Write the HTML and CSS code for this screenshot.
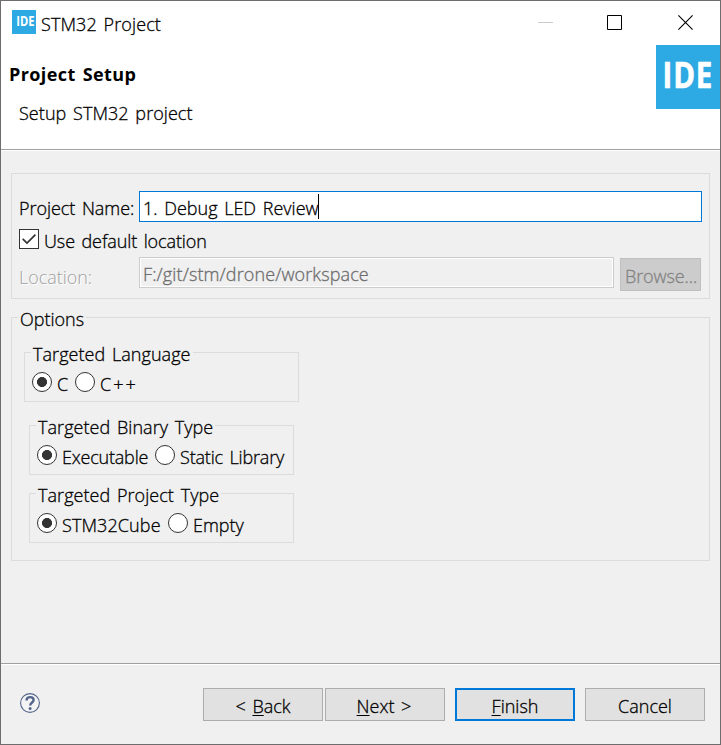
FILE: index.html
```html
<!DOCTYPE html>
<html lang="en">
<head>
<meta charset="utf-8">
<title>STM32 Project</title>
<link rel="stylesheet" href="styles.css">
</head>
<body>
<div class="window">
  <header class="titlebar">
    <span class="app-icon"><span class="ide-small">IDE</span></span>
    <span class="app-title">STM32 Project</span>
    <div class="controls">
      <svg width="16" height="16" viewBox="0 0 16 16"><path d="M0 7.5H15" stroke="#ccc"/></svg>
      <svg width="16" height="16" viewBox="0 0 16 16"><path d="M.5 .5H14.5V14.5H.5Z" fill="none" stroke="#000"/></svg>
      <svg width="16" height="16" viewBox="0 0 16 16"><path d="M.4 .4L14.6 14.6M14.6 .4L.4 14.6" fill="none" stroke="#000" stroke-width="1.1"/></svg>
    </div>
  </header>
  <section class="banner">
    <div class="banner-text">
      <h1>Project Setup</h1>
      <p>Setup STM32 project</p>
    </div>
    <div class="logo"><span class="ide-large">IDE</span></div>
  </section>
  <main class="content">
    <section class="group project">
      <div class="row name-row">
        <label class="field-label">Project Name:</label>
        <div class="input active">1. Debug LED Review<span class="caret"></span></div>
      </div>
      <div class="row check-row">
        <span class="checkbox"><svg width="18" height="18" viewBox="0 0 18 18"><path d="M2.7 8.8L7 13.1L15.4 4.7" fill="none" stroke="#333" stroke-width="1.7"/></svg></span>
        <label class="check-label">Use default location</label>
      </div>
      <div class="row loc-row">
        <label class="field-label disabled">Location:</label>
        <div class="input readonly">F:/git/stm/drone/workspace</div>
        <div class="browse">Browse...</div>
      </div>
    </section>
    <section class="group options">
      <span class="legend">Options</span>
      <div class="group choice language">
        <span class="legend">Targeted Language</span>
        <span class="radio on"></span><span class="radio-label c">C</span>
        <span class="radio"></span><span class="radio-label cpp">C++</span>
      </div>
      <div class="group choice binary">
        <span class="legend">Targeted Binary Type</span>
        <span class="radio on"></span><span class="radio-label exe">Executable</span>
        <span class="radio"></span><span class="radio-label lib">Static Library</span>
      </div>
      <div class="group choice type">
        <span class="legend">Targeted Project Type</span>
        <span class="radio on"></span><span class="radio-label cube">STM32Cube</span>
        <span class="radio"></span><span class="radio-label">Empty</span>
      </div>
    </section>
  </main>
  <footer class="footer">
    <svg class="help" width="22" height="22" viewBox="0 0 22 22"><circle cx="11" cy="11" r="9.4" fill="#f4f4f5" stroke="#53658a" stroke-width="1.1"/><path d="M7.5 8.6C7.5 6.2 9 5.1 11.1 5.1C13.2 5.1 14.6 6.3 14.6 8C14.6 10.5 11.2 10.5 11.2 13.6" fill="none" stroke="#53658a" stroke-width="2.4"/><circle cx="11.1" cy="16.4" r="1.5" fill="#53658a"/></svg>
    <div class="button">&lt; <u>B</u>ack</div>
    <div class="button next"><u>N</u>ext &gt;</div>
    <div class="button primary"><u>F</u>inish</div>
    <div class="button">Cancel</div>
  </footer>
</div>
</body>
</html>
```
FILE: styles.css
```css
* { box-sizing: border-box; }
body {
  margin: 0;
  font: 300 18px/24px "Open Sans", "Noto Sans", sans-serif;
  word-spacing: 2px;
  color: #000;
  -webkit-text-stroke: 0.3px currentColor;
}
.window {
  display: flex;
  flex-direction: column;
  width: 721px;
  height: 745px;
  border: 1px solid #6d6d6d;
  background: #f0f0f0;
  white-space: nowrap;
}
svg { display: block; flex: none; }

.titlebar { display: flex; height: 44px; background: #fff; padding: 9px 11px 0; }
.app-icon {
  width: 24px; height: 24px; background: #2da9e3; color: #fff;
  display: flex; align-items: center; justify-content: center;
}
.ide-small { font: 700 14px/24px "Open Sans", sans-serif; transform: translate(1px, -1px) scaleX(.8); -webkit-text-stroke: 0; }
.app-title { margin: 2px 0 0 5px; letter-spacing: .1px; }
.controls { display: flex; gap: 55px; margin: 5px 15px 0 auto; }
.controls svg:first-child { margin-right: -2px; }

.banner { display: flex; justify-content: space-between; height: 104px; background: #fff; }
.banner-text { padding-left: 8px; }
h1 { margin: 17px 0 0; font-size: 18px; line-height: 24px; font-weight: 700; letter-spacing: .4px; -webkit-text-stroke: 0; }
p { margin: 15px 0 0 10px; letter-spacing: .05px; }
.logo {
  width: 64px; height: 64px; background: #2da9e3; color: #fff;
  display: flex; justify-content: center; align-items: center;
}
.ide-large {
  font: 700 36px/60px "Open Sans", sans-serif; letter-spacing: 1px;
  transform: translateY(-2px) scaleX(.82); -webkit-text-stroke: .6px #fff;
}

.content {
  flex: 1;
  border-top: 1px solid #a0a0a0;
  box-shadow: inset 0 1px #fff;
  padding: 23px 10px 0;
}
.group { position: relative; border: 1px solid #dcdcdc; }
.project { height: 126px; padding: 17px 7px 0 7px; }
.row { display: flex; }
.field-label { width: 120px; padding-top: 5px; flex: none; letter-spacing: -.05px; }
.input { height: 31px; padding: 4px 0 0 3px; }
.active { flex: none; width: 563px; background: #fff; border: 1px solid #0078d7; display: flex; }
.caret { width: 1px; height: 25px; background: #000; margin-top: -2px; margin-left: -1px; }
.check-row { margin-top: 7px; }
.checkbox { width: 20px; height: 20px; border: 1px solid #333; background: #fff; }
.check-label { margin-left: 5px; letter-spacing: -.1px; }
.loc-row { margin-top: 4px; }
.disabled { color: #a0a0a0; text-shadow: 1px 1px #fff; padding-top: 8px; -webkit-text-stroke: 0; }
.readonly {
  width: 475px; border: 1px solid #ccc; box-shadow: inset 0 0 0 1px #fff;
  color: #6d6d6d; letter-spacing: .12px;
}
.browse {
  width: 81px; height: 33px; margin: 1px 0 0 6px; padding: 5px 0 0 4px;
  background: #ccc; border: 1px solid #bfbfbf; color: #838383; letter-spacing: -.1px;
}

.options { height: 244px; margin-top: 18px; padding: 34px 0 0 12px; }
.legend {
  position: absolute; left: 6px; top: -11px; padding: 0 2px;
  line-height: 24px; background: #f0f0f0;
}
.choice { display: flex; width: 265px; height: 50px; padding: 19px 0 0 7px; margin-left: 5px; }
.language { width: 275px; margin-left: 0; }
.choice .legend { letter-spacing: .05px; }
.binary { margin-top: 23px; }
.type { margin-top: 18px; }
.radio {
  width: 20px; height: 20px; border: 1px solid #333; border-radius: 50%; background: #fff;
  flex: none;
}
.on { background: radial-gradient(circle, #333 4.7px, #fff 5.3px); }
.radio-label { margin: 0 5px; }
.c { width: 13px; }
.cpp { letter-spacing: 2px; }
.exe { width: 88px; letter-spacing: -.2px; }
.lib { letter-spacing: -.17px; }
.cube { width: 101px; letter-spacing: .1px; }

.footer {
  display: flex; height: 81px; padding: 24px 15px 0 18px;
  border-top: 1px solid #a0a0a0; box-shadow: inset 0 1px #fff;
}
.help { margin: 4px auto 0 0; }
.button {
  width: 120px; height: 33px; margin-left: 10px; padding-top: 5px; text-align: center;
  background: #e1e1e1; border: 1px solid #adadad;
}
.next { margin-left: 2px; padding-right: 2px; }
.primary { border: 2px solid #0078d7; padding-top: 4px; }
u { text-decoration-thickness: 1px; text-underline-offset: 2px; }
```
